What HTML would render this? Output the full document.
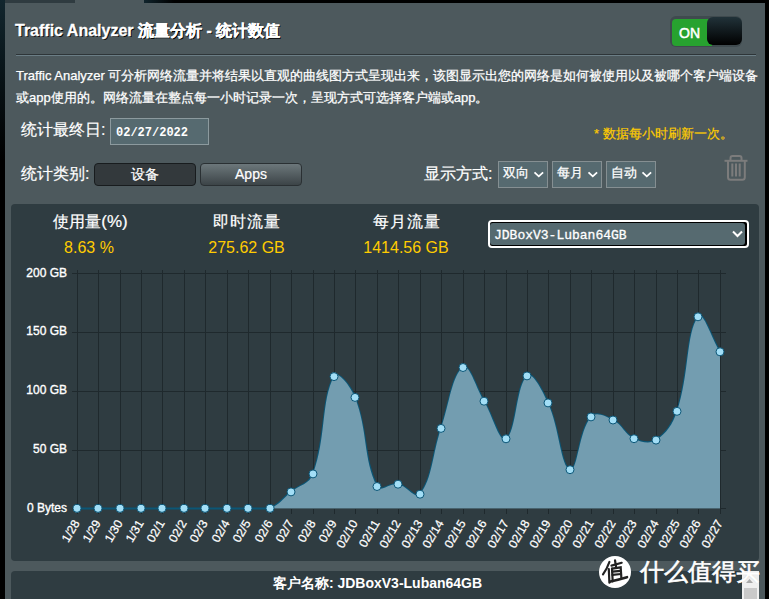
<!DOCTYPE html>
<html><head><meta charset="utf-8">
<style>
html,body{margin:0;padding:0;}
body{width:769px;height:599px;overflow:hidden;position:relative;background:#000;font-family:"Liberation Sans",sans-serif;color:#fff;}
.abs{position:absolute;}
#leftedge{left:0;top:0;width:5px;height:599px;background:linear-gradient(180deg,#12262e 0,#0a171c 60px,#000 160px);}
#topbar1{left:5px;top:0;width:70px;height:3px;background:#2f3b40;}
#topbar2{left:75px;top:0;width:69px;height:3px;background:#4d595d;}
#topbar3{left:144px;top:0;width:625px;height:3px;background:linear-gradient(90deg,#10242c,#000 30px);}
#rightedge{left:765px;top:0;width:4px;height:599px;background:#000;}
#panel{left:5px;top:3px;width:760px;height:596px;background:#4d595d;}
.title{left:15px;top:21px;font-size:16px;font-weight:bold;text-shadow:1px 1px 0 #000;white-space:nowrap;-webkit-text-stroke:0.3px #fff;}
.split1{left:16px;top:54px;width:740px;height:1px;background:#2e3538;}
.split2{left:16px;top:55px;width:740px;height:1px;background:#6b7e86;}
.desc{left:16px;top:65px;font-size:13px;line-height:22px;white-space:nowrap;-webkit-text-stroke:0.25px #fff;}
.lbl{font-size:16px;white-space:nowrap;-webkit-text-stroke:0.2px #fff;}
.toggle{left:670px;top:16px;width:72px;height:31px;border-radius:6px;background:#3f4a4e;}
.tg-green{left:672px;top:19px;width:40px;height:27px;border-radius:4px 0 0 4px;background:#27a22f;}
.tg-on{left:679px;top:25px;font-size:14px;-webkit-text-stroke:0.5px #fff;}
.tg-knob{left:707px;top:17px;width:35px;height:28px;border-radius:6px;background:linear-gradient(180deg,#213239,#000);}
.date{left:110px;top:118px;width:97px;height:25px;border:1px solid #8c9a9e;background:#566a70;box-sizing:content-box;}
.datetxt{left:116px;top:126px;font-family:"Liberation Mono",monospace;font-size:12px;font-weight:bold;}
.refresh{left:594px;top:125px;font-size:13px;color:#ffcc00;white-space:nowrap;-webkit-text-stroke:0.2px #ffcc00;}
.btn{top:163px;width:100px;height:21px;border-radius:4px;text-align:center;font-size:14px;line-height:21px;-webkit-text-stroke:0.2px #fff;}
.btn1{left:94px;background:#33393c;border:1px solid #181c1e;}
.btn2{left:200px;background:linear-gradient(180deg,#6c777b,#3c4447);border:1px solid #2a3033;}
.sel{top:161px;height:25px;border:1px solid #858f92;background:#566a70;}
.seltxt{font-size:13px;top:164px;-webkit-text-stroke:0.25px #fff;}
.chev{width:10px;height:6px;}
.chartbg{left:11px;top:204px;width:748px;height:357px;border-radius:4px;background:#2f3c41;}
.hd{-webkit-text-stroke:0.2px #fff;font-size:16px;text-align:center;width:150px;}
.yv{font-size:16px;color:#ffcc00;text-align:center;width:150px;}
.dev{left:488px;top:220px;width:257px;height:24px;border:2px solid #fff;border-radius:4px;background:#000;}
.devin{left:490px;top:223px;width:255px;height:22px;border-radius:3px;background:#566a70;}
.devtxt{left:494px;top:228px;font-family:"Liberation Mono",monospace;font-size:13px;-webkit-text-stroke:0.3px #fff;}
.chart{position:absolute;left:0;top:0;}
.bottom{left:11px;top:571px;width:748px;height:40px;border-radius:4px;background:#2f3c41;}
.client{left:0;top:575px;width:755px;text-align:center;font-size:14px;font-weight:bold;}
</style></head><body>
<div class="abs" id="panel"></div>
<div class="abs" id="leftedge"></div>
<div class="abs" id="topbar1"></div>
<div class="abs" id="topbar2"></div>
<div class="abs" id="topbar3"></div>
<div class="abs" id="rightedge"></div>

<div class="abs title">Traffic Analyzer 流量分析 - 统计数值</div>
<div class="abs toggle"></div>
<div class="abs tg-green"></div>
<div class="abs tg-on">ON</div>
<div class="abs tg-knob"></div>
<div class="abs split1"></div><div class="abs split2"></div>
<div class="abs desc">Traffic Analyzer 可分析网络流量并将结果以直观的曲线图方式呈现出来，该图显示出您的网络是如何被使用以及被哪个客户端设备<br>或app使用的。网络流量在整点每一小时记录一次，呈现方式可选择客户端或app。</div>

<div class="abs lbl" style="left:21px;top:120px;">统计最终日:</div>
<div class="abs date"></div>
<div class="abs datetxt">02/27/2022</div>
<div class="abs refresh">* 数据每小时刷新一次。</div>

<div class="abs lbl" style="left:21px;top:164px;">统计类别:</div>
<div class="abs btn btn1">设备</div>
<div class="abs btn btn2">Apps</div>

<div class="abs lbl" style="left:424px;top:164px;">显示方式:</div>
<div class="abs sel" style="left:498px;width:48px;"></div>
<div class="abs seltxt" style="left:503px;">双向</div>
<div class="abs sel" style="left:552px;width:48px;"></div>
<div class="abs seltxt" style="left:557px;">每月</div>
<div class="abs sel" style="left:606px;width:48px;"></div>
<div class="abs seltxt" style="left:611px;">自动</div>
<svg class="abs" style="left:0;top:0" width="769" height="200">
<g fill="none" stroke="#fff" stroke-width="1.8"><path d="M534.5 172.3 L538.8 176.3 L543.1 172.3"/><path d="M588.5 172.3 L592.8 176.3 L597.1 172.3"/><path d="M642.5 172.3 L646.8 176.3 L651.1 172.3"/></g>
<g fill="none" stroke="#7c7c7c" stroke-width="2">
<path d="M730.5 160 V158 Q730.5 156 732.5 156 H739.5 Q741.5 156 741.5 158 V160"/>
<path d="M724.5 160.8 H747.5"/>
<path d="M728 161 V177.3 Q728 179.8 730.5 179.8 H742.3 Q744.8 179.8 744.8 177.3 V161"/>
<path d="M732.3 163.5 V176.5 M736 163.5 V176.5 M739.7 163.5 V176.5"/>
</g>
</svg>

<div class="abs chartbg"></div>
<div class="abs hd" style="left:15.5px;top:212px;">使用量<span style="font-size:17px">(%)</span></div>
<div class="abs yv" style="left:14px;top:239px;">8.63 %</div>
<div class="abs hd" style="left:172px;top:212px;letter-spacing:1px;">即时流量</div>
<div class="abs yv" style="left:171.5px;top:239px;">275.62 GB</div>
<div class="abs hd" style="left:332px;top:212px;letter-spacing:1px;">每月流量</div>
<div class="abs yv" style="left:331px;top:239px;">1414.56 GB</div>
<div class="abs dev"></div>
<div class="abs devin"></div>
<div class="abs devtxt">JDBoxV3-Luban64GB</div>
<svg class="abs" style="left:0;top:0" width="769" height="260"><path d="M733 231.5 L737.5 236 L742 231.5" fill="none" stroke="#fff" stroke-width="2"/></svg>
<svg class="chart" width="769" height="599" viewBox="0 0 769 599">
<g stroke="#1f292d" stroke-width="1" shape-rendering="crispEdges"><line x1="72" y1="273.5" x2="726" y2="273.5"/><line x1="72" y1="332.5" x2="726" y2="332.5"/><line x1="72" y1="391.5" x2="726" y2="391.5"/><line x1="72" y1="450.5" x2="726" y2="450.5"/><line x1="72" y1="508.5" x2="726" y2="508.5"/><line x1="77.5" y1="270" x2="77.5" y2="513.5"/><line x1="98.5" y1="270" x2="98.5" y2="513.5"/><line x1="120.5" y1="270" x2="120.5" y2="513.5"/><line x1="141.5" y1="270" x2="141.5" y2="513.5"/><line x1="162.5" y1="270" x2="162.5" y2="513.5"/><line x1="184.5" y1="270" x2="184.5" y2="513.5"/><line x1="205.5" y1="270" x2="205.5" y2="513.5"/><line x1="227.5" y1="270" x2="227.5" y2="513.5"/><line x1="248.5" y1="270" x2="248.5" y2="513.5"/><line x1="270.5" y1="270" x2="270.5" y2="513.5"/><line x1="291.5" y1="270" x2="291.5" y2="513.5"/><line x1="313.5" y1="270" x2="313.5" y2="513.5"/><line x1="334.5" y1="270" x2="334.5" y2="513.5"/><line x1="355.5" y1="270" x2="355.5" y2="513.5"/><line x1="377.5" y1="270" x2="377.5" y2="513.5"/><line x1="398.5" y1="270" x2="398.5" y2="513.5"/><line x1="420.5" y1="270" x2="420.5" y2="513.5"/><line x1="441.5" y1="270" x2="441.5" y2="513.5"/><line x1="463.5" y1="270" x2="463.5" y2="513.5"/><line x1="484.5" y1="270" x2="484.5" y2="513.5"/><line x1="506.5" y1="270" x2="506.5" y2="513.5"/><line x1="527.5" y1="270" x2="527.5" y2="513.5"/><line x1="548.5" y1="270" x2="548.5" y2="513.5"/><line x1="570.5" y1="270" x2="570.5" y2="513.5"/><line x1="591.5" y1="270" x2="591.5" y2="513.5"/><line x1="613.5" y1="270" x2="613.5" y2="513.5"/><line x1="634.5" y1="270" x2="634.5" y2="513.5"/><line x1="656.5" y1="270" x2="656.5" y2="513.5"/><line x1="677.5" y1="270" x2="677.5" y2="513.5"/><line x1="698.5" y1="270" x2="698.5" y2="513.5"/><line x1="720.5" y1="270" x2="720.5" y2="513.5"/></g>
<path d="M77.00 508.40 C85.40 508.40 89.60 508.40 98.00 508.40 C106.80 508.40 111.20 508.40 120.00 508.40 C128.40 508.40 132.60 508.40 141.00 508.40 C149.40 508.40 153.60 508.40 162.00 508.40 C170.80 508.40 175.20 508.40 184.00 508.40 C192.40 508.40 196.60 508.40 205.00 508.40 C213.80 508.40 218.20 508.40 227.00 508.40 C235.40 508.40 239.60 508.40 248.00 508.40 C256.80 508.40 262.23 508.40 270.00 508.40 C279.43 504.78 282.67 498.58 291.00 491.90 C299.87 484.78 309.18 484.14 313.00 473.90 C326.38 438.02 321.05 400.19 334.00 376.60 C337.85 369.59 350.81 386.69 355.00 397.40 C368.01 430.65 363.02 458.28 377.00 486.50 C380.22 493.00 389.98 482.76 398.00 484.20 C407.18 485.84 415.54 499.99 420.00 494.20 C432.74 477.67 432.12 454.56 441.00 428.40 C449.32 403.88 452.34 374.24 463.00 367.50 C469.54 363.36 475.80 387.60 484.00 401.20 C493.00 416.12 499.18 442.81 506.00 438.80 C516.38 432.69 515.92 385.37 527.00 375.90 C532.72 371.01 542.37 390.62 548.00 402.90 C559.57 428.14 560.49 466.60 570.00 469.70 C577.69 472.20 578.63 431.19 591.00 416.90 C595.83 411.31 605.41 416.15 613.00 420.00 C622.61 424.87 624.36 434.19 634.00 438.70 C641.56 442.23 649.43 444.29 656.00 440.10 C666.63 433.33 672.48 424.57 677.00 411.30 C689.28 375.25 685.95 333.48 698.00 316.80 C703.15 309.68 711.20 337.80 720.00 351.80" fill="none" stroke="#0b5676" stroke-width="2"/>
<path d="M77.00 508.40 C85.40 508.40 89.60 508.40 98.00 508.40 C106.80 508.40 111.20 508.40 120.00 508.40 C128.40 508.40 132.60 508.40 141.00 508.40 C149.40 508.40 153.60 508.40 162.00 508.40 C170.80 508.40 175.20 508.40 184.00 508.40 C192.40 508.40 196.60 508.40 205.00 508.40 C213.80 508.40 218.20 508.40 227.00 508.40 C235.40 508.40 239.60 508.40 248.00 508.40 C256.80 508.40 262.23 508.40 270.00 508.40 C279.43 504.78 282.67 498.58 291.00 491.90 C299.87 484.78 309.18 484.14 313.00 473.90 C326.38 438.02 321.05 400.19 334.00 376.60 C337.85 369.59 350.81 386.69 355.00 397.40 C368.01 430.65 363.02 458.28 377.00 486.50 C380.22 493.00 389.98 482.76 398.00 484.20 C407.18 485.84 415.54 499.99 420.00 494.20 C432.74 477.67 432.12 454.56 441.00 428.40 C449.32 403.88 452.34 374.24 463.00 367.50 C469.54 363.36 475.80 387.60 484.00 401.20 C493.00 416.12 499.18 442.81 506.00 438.80 C516.38 432.69 515.92 385.37 527.00 375.90 C532.72 371.01 542.37 390.62 548.00 402.90 C559.57 428.14 560.49 466.60 570.00 469.70 C577.69 472.20 578.63 431.19 591.00 416.90 C595.83 411.31 605.41 416.15 613.00 420.00 C622.61 424.87 624.36 434.19 634.00 438.70 C641.56 442.23 649.43 444.29 656.00 440.10 C666.63 433.33 672.48 424.57 677.00 411.30 C689.28 375.25 685.95 333.48 698.00 316.80 C703.15 309.68 711.20 337.80 720.00 351.80 L720.00 508.40 L77.00 508.40 Z" fill="#739db0"/>
<g fill="#a2def6" stroke="#0c5677" stroke-width="1"><circle cx="77.00" cy="508.40" r="4"/><circle cx="98.00" cy="508.40" r="4"/><circle cx="120.00" cy="508.40" r="4"/><circle cx="141.00" cy="508.40" r="4"/><circle cx="162.00" cy="508.40" r="4"/><circle cx="184.00" cy="508.40" r="4"/><circle cx="205.00" cy="508.40" r="4"/><circle cx="227.00" cy="508.40" r="4"/><circle cx="248.00" cy="508.40" r="4"/><circle cx="270.00" cy="508.40" r="4"/><circle cx="291.00" cy="491.90" r="4"/><circle cx="313.00" cy="473.90" r="4"/><circle cx="334.00" cy="376.60" r="4"/><circle cx="355.00" cy="397.40" r="4"/><circle cx="377.00" cy="486.50" r="4"/><circle cx="398.00" cy="484.20" r="4"/><circle cx="420.00" cy="494.20" r="4"/><circle cx="441.00" cy="428.40" r="4"/><circle cx="463.00" cy="367.50" r="4"/><circle cx="484.00" cy="401.20" r="4"/><circle cx="506.00" cy="438.80" r="4"/><circle cx="527.00" cy="375.90" r="4"/><circle cx="548.00" cy="402.90" r="4"/><circle cx="570.00" cy="469.70" r="4"/><circle cx="591.00" cy="416.90" r="4"/><circle cx="613.00" cy="420.00" r="4"/><circle cx="634.00" cy="438.70" r="4"/><circle cx="656.00" cy="440.10" r="4"/><circle cx="677.00" cy="411.30" r="4"/><circle cx="698.00" cy="316.80" r="4"/><circle cx="720.00" cy="351.80" r="4"/></g>
<g fill="#fff" stroke="#fff" stroke-width="0.35" font-family="Liberation Sans" font-size="12" text-anchor="end"><text x="67" y="276.50">200 GB</text><text x="67" y="335.38">150 GB</text><text x="67" y="394.25">100 GB</text><text x="67" y="453.12">50 GB</text><text x="67" y="512.00">0 Bytes</text></g>
<g fill="#fff" stroke="#fff" stroke-width="0.25" font-family="Liberation Sans" font-size="12" text-anchor="end"><text transform="translate(80.0 523) rotate(-60)">1/28</text><text transform="translate(101.0 523) rotate(-60)">1/29</text><text transform="translate(123.0 523) rotate(-60)">1/30</text><text transform="translate(144.0 523) rotate(-60)">1/31</text><text transform="translate(165.0 523) rotate(-60)">02/1</text><text transform="translate(187.0 523) rotate(-60)">02/2</text><text transform="translate(208.0 523) rotate(-60)">02/3</text><text transform="translate(230.0 523) rotate(-60)">02/4</text><text transform="translate(251.0 523) rotate(-60)">02/5</text><text transform="translate(273.0 523) rotate(-60)">02/6</text><text transform="translate(294.0 523) rotate(-60)">02/7</text><text transform="translate(316.0 523) rotate(-60)">02/8</text><text transform="translate(337.0 523) rotate(-60)">02/9</text><text transform="translate(358.0 523) rotate(-60)">02/10</text><text transform="translate(380.0 523) rotate(-60)">02/11</text><text transform="translate(401.0 523) rotate(-60)">02/12</text><text transform="translate(423.0 523) rotate(-60)">02/13</text><text transform="translate(444.0 523) rotate(-60)">02/14</text><text transform="translate(466.0 523) rotate(-60)">02/15</text><text transform="translate(487.0 523) rotate(-60)">02/16</text><text transform="translate(509.0 523) rotate(-60)">02/17</text><text transform="translate(530.0 523) rotate(-60)">02/18</text><text transform="translate(551.0 523) rotate(-60)">02/19</text><text transform="translate(573.0 523) rotate(-60)">02/20</text><text transform="translate(594.0 523) rotate(-60)">02/21</text><text transform="translate(616.0 523) rotate(-60)">02/22</text><text transform="translate(637.0 523) rotate(-60)">02/23</text><text transform="translate(659.0 523) rotate(-60)">02/24</text><text transform="translate(680.0 523) rotate(-60)">02/25</text><text transform="translate(701.0 523) rotate(-60)">02/26</text><text transform="translate(723.0 523) rotate(-60)">02/27</text></g>
</svg>
<div class="abs bottom"></div>
<div class="abs client">客户名称: JDBoxV3-Luban64GB</div>
<div class="abs" style="left:742px;top:571px;width:17px;height:28px;background:#efefef;"></div>
<div class="abs" style="left:744px;top:588px;width:13px;height:11px;background:#c9c9c9;"></div>
<svg class="abs" style="left:0;top:0" width="769" height="599"><path d="M746 583 L749.5 579 L753 583 Z" fill="#a8a8a8"/></svg>
<div class="abs" style="left:599px;top:556px;width:32px;height:32px;border-radius:50%;background:#fff;"></div>
<svg class="abs" style="left:0;top:0" width="769" height="599"><g fill="none" stroke="#222" stroke-width="2.2" stroke-linecap="round">
<path d="M609.4 562 Q607 569 603 574.4"/><path d="M608.8 569 L609.4 582.7"/><path d="M615 560.3 L616 566.5"/><path d="M611.5 565.6 L621.7 562.8"/>
<path d="M612 568.7 L612.7 581.4"/><path d="M612 568.7 L620.7 567.3 L621.4 578.4"/><path d="M612.3 571.6 L620.8 570.8"/><path d="M612.5 574.8 L621 574"/>
<path d="M610.5 581.6 Q619 579.5 627 577.2" stroke-width="2.6"/></g></svg>
<div class="abs" style="left:640px;top:556px;font-size:23.5px;line-height:32px;color:#fff;white-space:nowrap;-webkit-text-stroke:0.6px #fff;text-shadow:0 0 1px rgba(0,0,0,0.3);">什么值得买</div>
</body></html>
